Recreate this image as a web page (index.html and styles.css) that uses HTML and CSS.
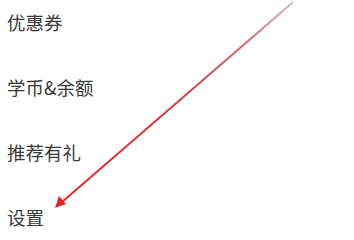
FILE: index.html
```html
<!DOCTYPE html>
<html lang="zh">
<head>
<meta charset="utf-8">
<link rel="stylesheet" href="styles.css">
</head>
<body>
<ul class="menu">
  <li class="item">优惠券</li>
  <li class="item">学币&amp;余额</li>
  <li class="item">推荐有礼</li>
  <li class="item">设置</li>
</ul>
<svg class="annot" width="354" height="231" viewBox="0 0 354 231">
  <defs>
    <linearGradient id="g" x1="292" y1="3" x2="55" y2="208" gradientUnits="userSpaceOnUse">
      <stop offset="0" stop-color="#d9b8be"/>
      <stop offset="0.2" stop-color="#cf6870"/>
      <stop offset="0.5" stop-color="#d43a3e"/>
      <stop offset="1" stop-color="#e52626"/>
    </linearGradient>
  </defs>
  <line x1="292" y1="3" x2="62" y2="202" stroke="url(#g)" stroke-width="2" stroke-linecap="round"/>
  <polygon points="55,208 59,196 66,204" fill="#e52626"/>
</svg>
</body>
</html>
```
FILE: styles.css
```css
html, body {
  margin: 0;
  padding: 0;
  background: #ffffff;
}
body {
  position: relative;
  width: 354px;
  height: 231px;
  overflow: hidden;
  font-family: "Noto Sans CJK SC", "Noto Sans", sans-serif;
  color: #3a3a3a;
}
.menu {
  list-style: none;
  margin: 0;
  padding: 11px 0 0 7px;
  display: flex;
  flex-direction: column;
  gap: 43px;
}
.item {
  font-size: 18.5px;
  line-height: 22px;
  height: 22px;
}
.annot {
  position: absolute;
  left: 0;
  top: 0;
}
```
